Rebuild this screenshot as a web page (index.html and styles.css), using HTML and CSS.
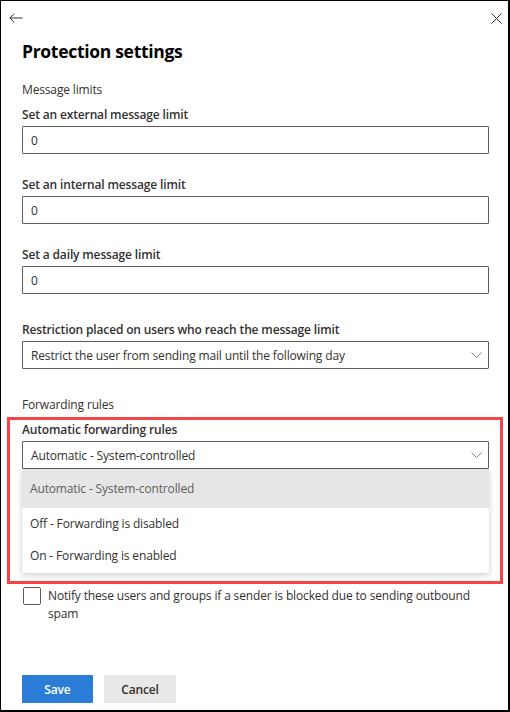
FILE: index.html
```html
<!DOCTYPE html>
<html lang="en">
<head>
<meta charset="utf-8">
<title>Protection settings</title>
<link rel="stylesheet" href="styles.css">
</head>
<body>
<div class="panel">
  <div class="header">
    <svg class="icon-back" width="14" height="10" viewBox="0 0 14 10"><path d="M0.8 5 H13.5 M5.3 0.6 L0.8 5 L5.3 9.4" fill="none" stroke="#323130" stroke-width="1"/></svg>
    <svg class="icon-close" width="11" height="11" viewBox="0 0 11 11"><path d="M0.5 0.5 L10.5 10.5 M10.5 0.5 L0.5 10.5" fill="none" stroke="#323130" stroke-width="1"/></svg>
  </div>
  <div class="content">
    <h1 class="title">Protection settings</h1>

    <div class="section-title">Message limits</div>
    <label class="label lbl-first">Set an external message limit</label>
    <div class="field"><span>0</span></div>

    <label class="label">Set an internal message limit</label>
    <div class="field"><span>0</span></div>

    <label class="label">Set a daily message limit</label>
    <div class="field"><span>0</span></div>

    <label class="label lbl-wide">Restriction placed on users who reach the message limit</label>
    <div class="field dropdown"><span>Restrict the user from sending mail until the following day</span>
      <svg class="chev" width="11" height="6" viewBox="0 0 11 6"><path d="M0.5 0.5 L5.5 5.5 L10.5 0.5" fill="none" stroke="#8a8886" stroke-width="1"/></svg>
    </div>

    <div class="section-title sec-forward">Forwarding rules</div>
    <label class="label lbl-auto">Automatic forwarding rules</label>
    <div class="field dropdown"><span>Automatic - System-controlled</span>
      <svg class="chev" width="11" height="6" viewBox="0 0 11 6"><path d="M0.5 0.5 L5.5 5.5 L10.5 0.5" fill="none" stroke="#8a8886" stroke-width="1"/></svg>
    </div>
    <div class="menu">
      <div class="opt opt-selected">Automatic - System-controlled</div>
      <div class="opt">Off - Forwarding is disabled</div>
      <div class="opt">On - Forwarding is enabled</div>
    </div>

    <div class="check-row">
      <span class="checkbox"></span>
      <span class="check-text">Notify these users and groups if a sender is blocked due to sending outbound spam</span>
    </div>
  </div>
  <div class="footer">
    <button class="btn btn-primary">Save</button>
    <button class="btn btn-default">Cancel</button>
  </div>
  <div class="highlight"></div>
</div>
</body>
</html>
```

FILE: styles.css
```css
* { box-sizing: border-box; }
html, body { margin: 0; padding: 0; background: #fff; }
body {
  font-family: "Open Sans", "Noto Sans", sans-serif;
  color: #323130;
  font-size: 12px;
  letter-spacing: -0.15px;
}
.panel {
  position: relative;
  width: 510px;
  height: 712px;
  border-style: solid;
  border-color: #000;
  border-width: 1px 2px 2px 1px;
  display: flex;
  flex-direction: column;
  background: #fff;
}
.header {
  height: 34px;
  display: flex;
  align-items: center;
  justify-content: space-between;
  padding: 0 6px 0 8px;
}
.icon-back, .icon-close { display: block; }
.content {
  padding: 0 19px 0 21px;
  display: flex;
  flex-direction: column;
}
.title {
  margin: 2px 0 0;
  height: 28px;
  font-size: 17.5px;
  line-height: 28px;
  font-weight: 700;
  color: #000;
  letter-spacing: -0.3px;
}
.section-title {
  margin-top: 14px;
  line-height: 20px;
  padding-top: 1px;
  height: 20px;
  font-weight: 400;
}
.sec-forward { margin-top: 25px; }
.label {
  display: block;
  line-height: 20px;
  height: 20px;
  padding-top: 1px;
  font-weight: 600;
  margin-top: 20px;
  margin-bottom: 2px;
}
.lbl-first { margin-top: 5px; }
.lbl-wide { margin-top: 25px; }
.lbl-auto { margin-top: 5px; }
.field {
  height: 28px;
  border: 1px solid #605e5c;
  border-radius: 1px;
  display: flex;
  align-items: center;
  padding: 0 8px;
  color: #323130;
}
.dropdown { justify-content: space-between; padding-right: 6px; }
.chev { display: block; }
.menu {
  background: #fff;
  box-shadow: 0 3px 7px rgba(0,0,0,0.16), 0 0 2px rgba(0,0,0,0.08);
  padding-bottom: 1px;
}
.opt {
  height: 32px;
  line-height: 32px;
  padding: 0 8px;
  color: #323130;
}
.opt-selected {
  height: 39px;
  line-height: 39px;
  background: #e6e6e6;
  color: #605e5c;
}
.check-row {
  display: flex;
  align-items: flex-start;
  margin-top: 14px;
}
.checkbox {
  flex: none;
  width: 18px;
  height: 18px;
  border: 1px solid #605e5c;
  border-radius: 2px;
  margin-left: 1px;
}
.check-text {
  margin-left: 7px;
  line-height: 18px;
  padding-right: 10px;
}
.footer {
  margin-top: auto;
  padding: 0 0 7px 21px;
  display: flex;
  gap: 11px;
}
.btn {
  height: 28px;
  border: none;
  border-radius: 1px;
  font-family: inherit;
  font-size: 12px;
  letter-spacing: -0.15px;
  font-weight: 600;
  padding: 0;
}
.btn-primary { width: 71px; background: #2b7cd6; color: #fff; }
.btn-default { width: 72px; background: #e8e8e8; color: #323130; }
.highlight {
  position: absolute;
  left: 6px;
  top: 416px;
  width: 496px;
  height: 167px;
  border: 3px solid #f44446;
  pointer-events: none;
}
```
